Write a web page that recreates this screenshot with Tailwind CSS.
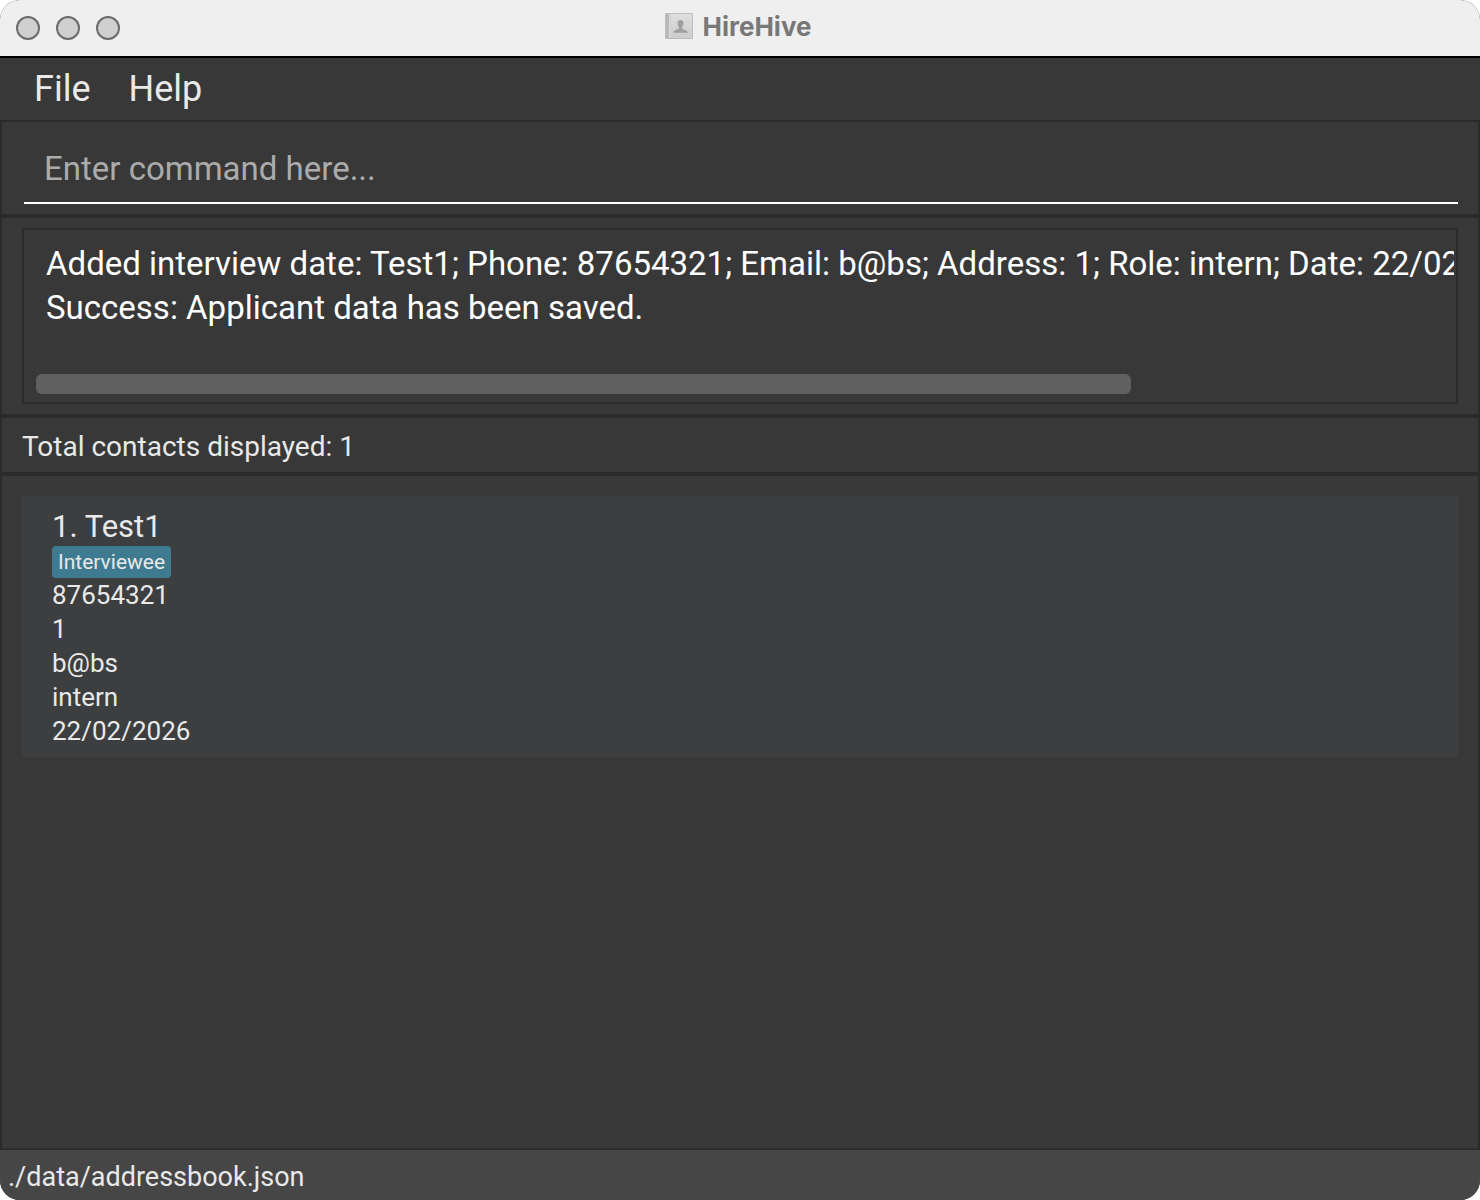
<!DOCTYPE html>
<html lang="en">
<head>
<meta charset="utf-8">
<meta name="viewport" content="width=device-width, initial-scale=1">
<title>HireHive</title>
<script src="https://cdn.jsdelivr.net/npm/@tailwindcss/browser@4"></script>
</head>
<body class="bg-white font-['Roboto',sans-serif]">
<div class="flex min-h-screen flex-col overflow-hidden rounded-[20px] bg-[#383838] text-[#e9e9e9]">

  <header class="grid h-14 grid-cols-[1fr_auto_1fr] items-center bg-[#efefef] px-4">
    <div class="flex gap-4">
      <button type="button" aria-label="Close" class="size-6 rounded-full border-2 border-[#6b6b6b] bg-[#d0d0d0]"></button>
      <button type="button" aria-label="Minimize" class="size-6 rounded-full border-2 border-[#6b6b6b] bg-[#d0d0d0]"></button>
      <button type="button" aria-label="Zoom" class="size-6 rounded-full border-2 border-[#6b6b6b] bg-[#d0d0d0]"></button>
    </div>
    <div class="flex items-center gap-2.5 pr-1 pb-0.5">
      <svg class="h-7 w-7" viewBox="0 0 28 28" aria-hidden="true">
        <defs>
          <linearGradient id="cover" x1="0" y1="0" x2="0" y2="1">
            <stop offset="0" stop-color="#dfdfdf"/>
            <stop offset="1" stop-color="#cdcdcd"/>
          </linearGradient>
        </defs>
        <rect x="0" y="0" width="28" height="26" rx="1" fill="#bdbdbd"/>
        <rect x="1" y="1" width="3" height="24" fill="#b8b8b8"/>
        <rect x="4" y="1" width="1.500" height="24" fill="#dedede"/>
        <rect x="6" y="1" width="21" height="24" fill="url(#cover)"/>
        <path d="M15.500 7c2 0 3.100 1.400 3.100 3.200 0 1.400-.6 2.600-1.400 3.400v2c.8 1 4.800 1.400 5.300 3.400v.8H8.500V19c.5-2 4.500-2.400 5.300-3.400v-2c-.8-.8-1.400-2-1.400-3.400 0-1.800 1.100-3.200 3.100-3.200z" fill="#a0a0a0"/>
      </svg>
      <h1 class="font-['Inter',sans-serif] text-[26px] leading-8 font-bold text-[#787878]">HireHive</h1>
    </div>
  </header>

  <nav aria-label="Main menu" class="flex h-[66px] items-center gap-[38px] border-t-2 border-b-2 border-t-black border-b-[#2b2b2b] px-[34px] text-[36px]">
    <button type="button">File</button>
    <button type="button">Help</button>
  </nav>

  <main class="flex flex-1 flex-col border-x-2 border-b-2 border-[#2b2b2b]">
    <section class="border-b-4 border-[#2b2b2b] px-5 pt-3 pb-2.5">
      <input type="text" aria-label="Command" placeholder="Enter command here..." class="mx-0.5 block h-[70px] w-[calc(100%-2px)] border-b-2 border-white bg-transparent px-5 text-[33px] text-white outline-none placeholder:text-[#ababab]">
    </section>

    <section class="border-b-4 border-[#2b2b2b] px-5 py-2.5">
      <div class="border-2 border-[#2b2b2b] px-0.5 pb-2">
        <div role="status" class="h-36 overflow-hidden pt-3 pl-5 text-[33px] leading-11 whitespace-nowrap text-white">
          <p>Added interview date: Test1; Phone: 87654321; Email: b@bs; Address: 1; Role: intern; Date: 22/02/2026</p>
          <p>Success: Applicant data has been saved.</p>
        </div>
        <div class="px-2.5">
          <div class="h-5 rounded-md bg-[#606060]" style="width: 77.8%"></div>
        </div>
      </div>
    </section>

    <section class="flex h-[58px] items-center border-b-4 border-[#2b2b2b] px-5 pt-1 text-[28px]">
      <p>Total contacts displayed: 1</p>
    </section>

    <ul class="flex-1 p-5">
      <li class="bg-[#3c3e3f] px-[30px] pt-3 pb-2.5 text-[26px] leading-[34px]">
        <h2 class="text-[31px] leading-[38px]">1. Test1</h2>
        <div class="flex"><span class="h-8 rounded-sm bg-[#3e7b91] px-1.5 text-[21px] leading-8">Interviewee</span></div>
        <p>87654321</p>
        <p>1</p>
        <p>b@bs</p>
        <p>intern</p>
        <p>22/02/2026</p>
      </li>
    </ul>
  </main>

  <footer class="flex h-[50px] items-center bg-[#464646] px-2 pt-1 text-[27px]">
    <p>./data/addressbook.json</p>
  </footer>
</div>
</body>
</html>
